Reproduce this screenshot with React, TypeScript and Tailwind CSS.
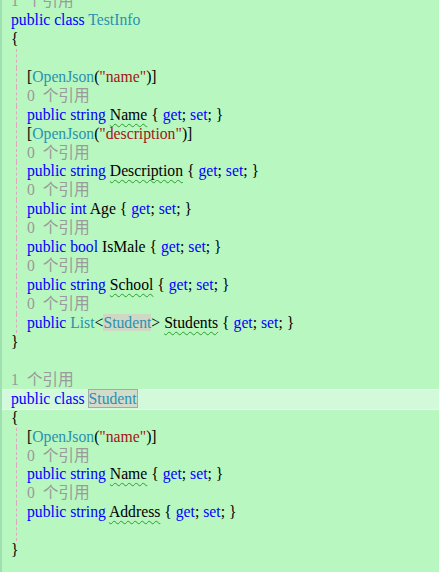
import React from "react";

const K = ({ c }: { c: string }) => <span className="text-[#0000ff]">{c}</span>;
const T = ({ c }: { c: string }) => <span className="text-[#2b91af]">{c}</span>;
const S = ({ c }: { c: string }) => <span className="text-[#a31515]">{c}</span>;
const W = ({ c }: { c: string }) => (
  <span className="underline decoration-wavy decoration-[#2c9b2c] decoration-1 underline-offset-[3px]">{c}</span>
);
const Ref = ({ n }: { n: string }) => (
  <span className="text-[#9a9a9a]">{n}&nbsp; 个引用</span>
);
const GS = () => (
  <>
    {" { "}
    <K c="get" />; <K c="set" />
    {"; }"}
  </>
);

type L = { i: number; c: React.ReactNode; hl?: boolean };

const lines: L[] = [
  { i: 0, c: <Ref n="1" /> },
  { i: 0, c: <><K c="public class " /><T c="TestInfo" /></> },
  { i: 0, c: "{" },
  { i: 1, c: "" },
  { i: 1, c: <>[<T c="OpenJson" />(<S c={'"name"'} />)]</> },
  { i: 1, c: <Ref n="0" /> },
  { i: 1, c: <><K c="public string " /><W c="Name" /><GS /></> },
  { i: 1, c: <>[<T c="OpenJson" />(<S c={'"description"'} />)]</> },
  { i: 1, c: <Ref n="0" /> },
  { i: 1, c: <><K c="public string " /><W c="Description" /><GS /></> },
  { i: 1, c: <Ref n="0" /> },
  { i: 1, c: <><K c="public int " />Age<GS /></> },
  { i: 1, c: <Ref n="0" /> },
  { i: 1, c: <><K c="public bool " />IsMale<GS /></> },
  { i: 1, c: <Ref n="0" /> },
  { i: 1, c: <><K c="public string " /><W c="School" /><GS /></> },
  { i: 1, c: <Ref n="0" /> },
  { i: 1, c: <><K c="public " /><T c="List" />&lt;<span className="bg-[#cfd8c4] text-[#2b91af]">Student</span>&gt; <W c="Students" /><GS /></> },
  { i: 0, c: "}" },
  { i: 0, c: "" },
  { i: 0, c: <Ref n="1" /> },
  { i: 0, hl: true, c: <><K c="public class " /><span className="text-[#2b91af] bg-[#d3dccb] outline outline-1 outline-[#a8a8a8]">Student</span></> },
  { i: 0, c: "{" },
  { i: 1, c: <>[<T c="OpenJson" />(<S c={'"name"'} />)]</> },
  { i: 1, c: <Ref n="0" /> },
  { i: 1, c: <><K c="public string " /><W c="Name" /><GS /></> },
  { i: 1, c: <Ref n="0" /> },
  { i: 1, c: <><K c="public string " /><W c="Address" /><GS /></> },
  { i: 1, c: "" },
  { i: 0, c: "}" },
];

export default function App() {
  return (
    <div className="w-[439px] h-[572px] overflow-hidden bg-[#b8f7c0] border-l-2 border-[#9fe0b0] text-black text-[15.7px] leading-[18.95px]" style={{ fontFamily: '"Liberation Serif", "Noto Sans CJK SC", serif' }}>
      <div className="-mt-[8px]">
        {lines.map((l, k) => (
          <div key={k} className={`relative h-[18.95px] whitespace-pre ${l.hl ? "bg-[#d2f9da] shadow-[0_-1px_0_#e6f9ea,0_1px_0_#e6f9ea]" : ""}`}>
            {l.i > 0 && <div className="absolute left-[14px] top-0 bottom-0 border-l border-dashed border-[#e0a8c0]" />}
            <div className={l.i ? "pl-[25px]" : "pl-[9px]"}>{l.c}</div>
          </div>
        ))}
      </div>
    </div>
  );
}
